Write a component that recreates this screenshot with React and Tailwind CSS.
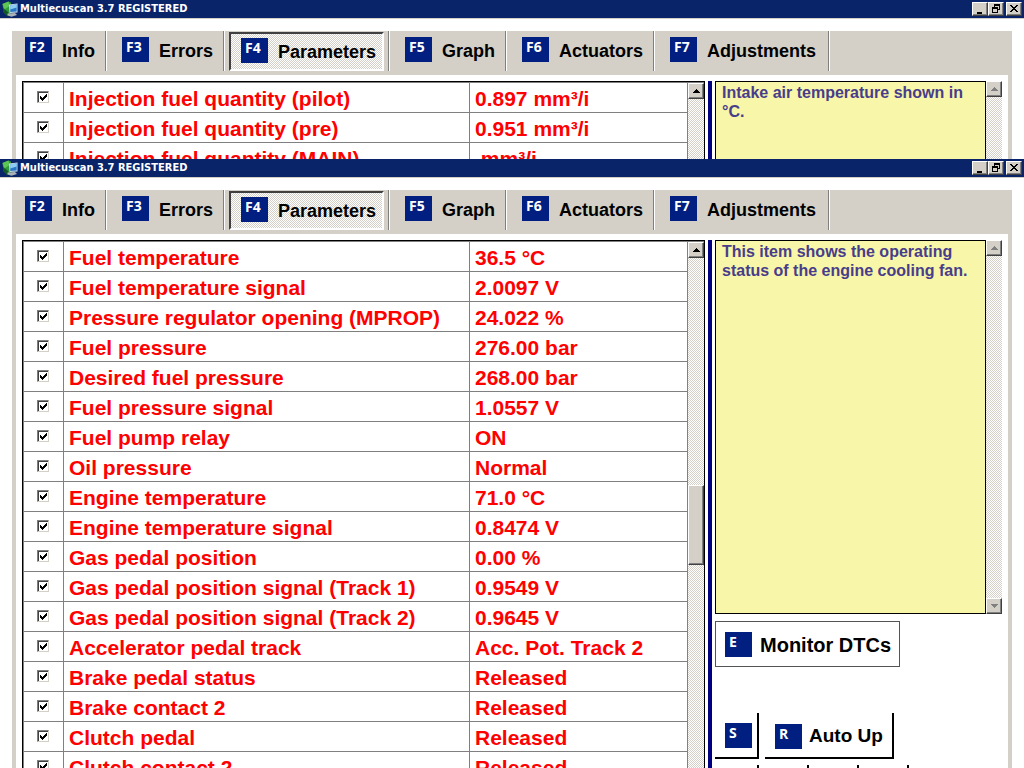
import React from "react";

const UI = "font-['Liberation_Sans',Arial,sans-serif]";
const BEVEL =
  "border border-t-white border-l-white border-r-[#404040] border-b-[#404040] bg-[#d4d0c8] shadow-[inset_-1px_-1px_0_#808080]";
const DITHER =
  "bg-[repeating-conic-gradient(#ffffff_0_25%,#d4d0c8_0_50%)] bg-[length:2px_2px]";

const TABS = [
  { key: "F2", label: "Info", box: "w-[95px] pl-[13px]" },
  { key: "F3", label: "Errors", box: "w-[118px] pl-[15px]" },
  { key: "F4", label: "Parameters", box: "w-[165px] pl-1", active: true },
  { key: "F5", label: "Graph", box: "w-[117px] pl-[15px]" },
  { key: "F6", label: "Actuators", box: "w-[148px] pl-[15px]" },
  { key: "F7", label: "Adjustments", box: "w-[175px] pl-[15px]" },
];

const FIRST_ROWS = [
  ["Injection fuel quantity (pilot)", "0.897 mm³/i"],
  ["Injection fuel quantity (pre)", "0.951 mm³/i"],
  ["Injection fuel quantity (MAIN)", " mm³/i"],
];

const SECOND_ROWS = [
  ["Fuel temperature", "36.5 °C"],
  ["Fuel temperature signal", "2.0097 V"],
  ["Pressure regulator opening (MPROP)", "24.022 %"],
  ["Fuel pressure", "276.00 bar"],
  ["Desired fuel pressure", "268.00 bar"],
  ["Fuel pressure signal", "1.0557 V"],
  ["Fuel pump relay", "ON"],
  ["Oil pressure", "Normal"],
  ["Engine temperature", "71.0 °C"],
  ["Engine temperature signal", "0.8474 V"],
  ["Gas pedal position", "0.00 %"],
  ["Gas pedal position signal (Track 1)", "0.9549 V"],
  ["Gas pedal position signal (Track 2)", "0.9645 V"],
  ["Accelerator pedal track", "Acc. Pot. Track 2"],
  ["Brake pedal status", "Released"],
  ["Brake contact 2", "Released"],
  ["Clutch pedal", "Released"],
  ["Clutch contact 2", "Released"],
];

function AppLogo() {
  return (
    <svg className="h-4 w-4" viewBox="0 0 16 16" aria-hidden="true">
      <path d="M0.5 3 6.5 0.5 9 1.5 9 12 5 14.5 1.5 11Z" fill="#2f9a3a" />
      <path d="M0.5 3 6.5 0.5 7.5 5 2.5 8.5Z" fill="#5fc455" />
      <path d="M1 7v4l3.5 3.5 3 .5L6 11Z" fill="#14582a" />
      <path d="M7 3.5 15.5 2.5v9L7.5 12Z" fill="#cfdde6" />
      <path d="M8 4.3 14.7 3.5v7L8.3 11Z" fill="#2878c8" />
      <path d="M8 4.3 14.7 3.5v3L8.2 8.5Z" fill="#8ccbf2" />
      <path d="M5.5 12.5 13 12l2 2-5.5 1.8-4-1.3Z" fill="#a9b3b8" />
    </svg>
  );
}

function TitleButton({ label, children }) {
  return (
    <button type="button" aria-label={label} className={`flex h-[14px] w-4 items-center justify-center ${BEVEL}`}>
      <svg className="h-3 w-3" viewBox="0 0 12 12" shapeRendering="crispEdges" aria-hidden="true">
        {children}
      </svg>
    </button>
  );
}

function TitleBar() {
  return (
    <header className="flex h-[19px] shrink-0 items-center border-b border-[#d4d0c8] bg-[#0a246a] pr-0.5 pl-0.5">
      <AppLogo />
      <h1 className="ml-0.5 flex-1 font-['DejaVu_Sans_Condensed','DejaVu_Sans',sans-serif] text-[11px] leading-4 font-bold text-white">
        Multiecuscan 3.7 REGISTERED
      </h1>
      <TitleButton label="Minimize">
        <path d="M3 9h5v2H3z" fill="#000" />
      </TitleButton>
      <TitleButton label="Restore">
        <path d="M4 1h6v2H4zM4 3h1v1H4zM9 3h1v4H9zM8 6h1v1H8zM2 4h6v2H2zM2 6h1v4H2zM7 6h1v4H7zM2 9h6v1H2z" fill="#000" />
      </TitleButton>
      <span className="w-0.5" />
      <TitleButton label="Close">
        <path
          d="M2 2h2v1H2zM8 2h2v1H8zM3 3h2v1H3zM7 3h2v1H7zM4 4h4v1H4zM5 5h2v1H5zM4 6h4v1H4zM3 7h2v1H3zM7 7h2v1H7zM2 8h2v1H2zM8 8h2v1H8z"
          fill="#000"
        />
      </TitleButton>
    </header>
  );
}

function KeyCap({ children }) {
  return (
    <span className="block h-[25px] w-[27px] shrink-0 bg-[#001f80] pl-1 text-left font-['Open_Sans','Noto_Sans',sans-serif] text-[14px] leading-5 font-bold text-white">
      {children}
    </span>
  );
}

function Toolbar() {
  return (
    <nav className="flex h-11 shrink-0 bg-[#d4d0c8]">
      {TABS.map((tab) => (
        <div
          key={tab.key}
          className={`flex h-10 shrink-0 items-start border-r border-white shadow-[inset_-1px_0_0_#808080] ${tab.box}`}
        >
          <button
            type="button"
            aria-pressed={Boolean(tab.active)}
            className={`flex items-start gap-2.5 text-[18px] leading-7 font-bold whitespace-nowrap text-black ${
              tab.active
                ? `mt-px h-[39px] w-[155px] border-2 border-t-[#404040] border-r-white border-b-white border-l-[#404040] pt-1 pl-2.5 ${DITHER}`
                : "pt-1.5"
            }`}
          >
            <KeyCap>{tab.key}</KeyCap>
            {tab.label}
          </button>
        </div>
      ))}
    </nav>
  );
}

function CheckBox({ label }) {
  return (
    <span className="relative mb-px ml-[13px] block h-3 w-3">
      <input
        type="checkbox"
        defaultChecked
        aria-label={label}
        className="peer block h-3 w-3 appearance-none border border-t-[#808080] border-r-[#d4d0c8] border-b-[#d4d0c8] border-l-[#808080] bg-white shadow-[inset_1px_1px_0_#404040]"
      />
      <svg
        className="pointer-events-none absolute top-0 left-0 hidden h-3 w-3 peer-checked:block"
        viewBox="0 0 12 12"
        shapeRendering="crispEdges"
        aria-hidden="true"
      >
        <path d="M3 5h1v3H3zM4 6h1v3H4zM5 7h1v3H5zM6 6h1v3H6zM7 5h1v3H7zM8 4h1v3H8zM9 3h1v3H9z" fill="#000" />
      </svg>
    </span>
  );
}

function Arrow({ down, muted }) {
  return (
    <svg className="h-1 w-[7px]" viewBox="0 0 7 4" shapeRendering="crispEdges" aria-hidden="true">
      <path
        d={down ? "M0 0h7v1H0zM1 1h5v1H1zM2 2h3v1H2zM3 3h1v1H3z" : "M3 0h1v1H3zM2 1h3v1H2zM1 2h5v1H1zM0 3h7v1H0z"}
        fill={muted ? "#808080" : "#000"}
      />
    </svg>
  );
}

function ScrollButton({ label, down, muted }) {
  return (
    <button
      type="button"
      aria-label={label}
      disabled={muted}
      className={`flex h-4 w-full shrink-0 items-center justify-center ${BEVEL}`}
    >
      <Arrow down={down} muted={muted} />
    </button>
  );
}

function ParameterTable({ rows, thumb }) {
  return (
    <div className="flex min-w-0 flex-1 overflow-hidden border-t border-r border-l border-black">
      <div className="min-w-0 flex-1 overflow-hidden border-t border-r border-l border-[#808080]">
        <table className="w-full table-fixed border-separate border-spacing-0">
          <colgroup>
            <col className="w-10" />
            <col />
            <col className="w-[217px]" />
          </colgroup>
          <tbody className="text-[21px] leading-6 font-bold whitespace-pre text-[#ff0000]">
            {rows.map(([name, value]) => (
              <tr key={name} className="h-[30px]">
                <td className="border-r border-b border-[#808080] p-0">
                  <CheckBox label={name} />
                </td>
                <td className="border-r border-b border-[#808080] p-0 pt-[3px] pl-[5px]">{name}</td>
                <td className="border-b border-[#808080] p-0 pt-[3px] pl-[5px]">{value}</td>
              </tr>
            ))}
          </tbody>
        </table>
      </div>
      <div className={`flex w-4 shrink-0 flex-col border-t border-[#808080] ${DITHER}`}>
        <ScrollButton label="Scroll up" />
        {thumb && <div className={`mt-[227px] h-20 ${BEVEL}`} />}
      </div>
    </div>
  );
}

function Description({ children }) {
  return (
    <div className="flex h-[374px] shrink-0">
      <p className="min-w-0 flex-1 border border-black bg-[#f8f6a8] pt-px pr-2 pl-1.5 text-[16px] leading-[19px] font-bold text-[#483d8b]">
        {children}
      </p>
      <div className={`flex w-4 shrink-0 flex-col justify-between ${DITHER}`}>
        <ScrollButton label="Scroll description up" muted />
        <ScrollButton label="Scroll description down" down muted />
      </div>
    </div>
  );
}

const RAISED = "border-r-2 border-b-2 border-r-black border-b-black";

function Actions() {
  return (
    <div className="flex flex-col items-start pt-[7px] font-bold text-black">
      <button
        type="button"
        className="flex h-[46px] w-[185px] items-center gap-2 border border-[#555555] bg-white pl-[9px] text-[20px] whitespace-nowrap"
      >
        <KeyCap>E</KeyCap>
        <span className="pt-0.5">Monitor DTCs</span>
      </button>
      <div className="mt-[46px] flex gap-1.5">
        <button type="button" aria-label="Start" className={`flex h-[46px] w-11 items-center pl-2.5 ${RAISED}`}>
          <KeyCap>S</KeyCap>
        </button>
        <button
          type="button"
          className={`flex h-[46px] w-[129px] items-center gap-[7px] pt-0.5 pl-2.5 text-[19px] whitespace-nowrap ${RAISED}`}
        >
          <KeyCap>R</KeyCap>
          Auto Up
        </button>
      </div>
      <div className="mt-1.5 flex gap-1.5">
        {["Slot 1", "Slot 2", "Slot 3", "Slot 4"].map((slot) => (
          <button key={slot} type="button" aria-label={slot} className={`h-[46px] w-11 ${RAISED}`} />
        ))}
      </div>
    </div>
  );
}

function ScannerWindow({ rows, description, thumb, className }) {
  return (
    <section className={`flex flex-col overflow-hidden bg-white ${className}`}>
      <TitleBar />
      <div className="flex min-h-0 flex-1 flex-col px-3 pt-3">
        <Toolbar />
        <main className="flex min-h-0 flex-1 overflow-hidden border-x-4 border-[#d4d0c8] pt-1.5 pr-1.5 pl-1.5">
          <ParameterTable rows={rows} thumb={thumb} />
          <div className="mr-[3px] ml-[3px] w-1 shrink-0 bg-[#00007f]" />
          <aside className="flex w-[287px] shrink-0 flex-col overflow-hidden">
            <Description>{description}</Description>
            <Actions />
          </aside>
        </main>
      </div>
    </section>
  );
}

export default function App() {
  return (
    <div className={`flex h-screen flex-col overflow-hidden bg-white ${UI}`}>
      <ScannerWindow
        className="h-[159px] shrink-0"
        rows={FIRST_ROWS}
        description="Intake air temperature shown in °C."
      />
      <ScannerWindow
        className="min-h-0 flex-1"
        rows={SECOND_ROWS}
        description="This item shows the operating status of the engine cooling fan."
        thumb
      />
    </div>
  );
}
